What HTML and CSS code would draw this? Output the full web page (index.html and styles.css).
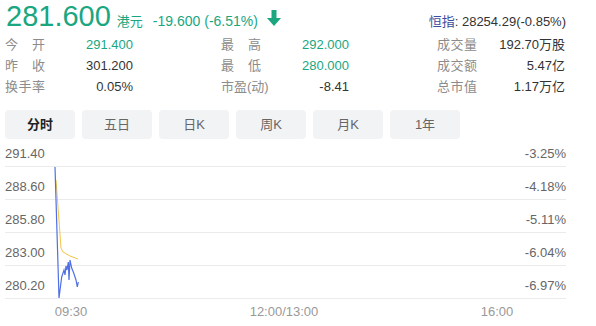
FILE: index.html
```html
<!DOCTYPE html>
<html lang="zh-CN">
<head>
    <meta charset="UTF-8">
    <title>行情</title>
    <link rel="stylesheet" href="styles.css">
</head>
<body>
<div class="quote">
    <div class="head">
        <span class="price">281.600</span>
        <span class="unit">港元</span>
        <span class="change">-19.600 (-6.51%)</span>
        <svg class="arrow" width="14" height="16" viewBox="0 0 14 16">
            <path d="M4.5 0 H9.5 V8 H14 L7 16 L0 8 H4.5 Z" fill="#1aa67f"/>
        </svg>
        <span class="index"><span class="index-name">恒指</span>: 28254.29(-0.85%)</span>
    </div>

    <div class="stats">
        <div class="stat"><span class="lbl">今 开</span><span class="val up">291.400</span></div>
        <div class="stat"><span class="lbl">最 高</span><span class="val up">292.000</span></div>
        <div class="stat"><span class="lbl">成交量</span><span class="val">192.70万股</span></div>
        <div class="stat"><span class="lbl">昨 收</span><span class="val">301.200</span></div>
        <div class="stat"><span class="lbl">最 低</span><span class="val up">280.000</span></div>
        <div class="stat"><span class="lbl">成交额</span><span class="val">5.47亿</span></div>
        <div class="stat"><span class="lbl">换手率</span><span class="val">0.05%</span></div>
        <div class="stat"><span class="lbl">市盈(动)</span><span class="val">-8.41</span></div>
        <div class="stat"><span class="lbl">总市值</span><span class="val">1.17万亿</span></div>
    </div>

    <div class="tabs">
        <div class="tab active">分时</div>
        <div class="tab">五日</div>
        <div class="tab">日K</div>
        <div class="tab">周K</div>
        <div class="tab">月K</div>
        <div class="tab">1年</div>
    </div>

    <div class="chart">
        <div class="row first"><span>291.40</span><span>-3.25%</span></div>
        <div class="row"><span>288.60</span><span>-4.18%</span></div>
        <div class="row"><span>285.80</span><span>-5.11%</span></div>
        <div class="row"><span>283.00</span><span>-6.04%</span></div>
        <div class="row"><span>280.20</span><span>-6.97%</span></div>
        <div class="times">
            <span>09:30</span>
            <span>12:00/13:00</span>
            <span>16:00</span>
        </div>
        <!-- price line and average line -->
        <svg class="plot" width="561" height="160" viewBox="0 0 561 160">
            <polyline fill="none" stroke="#f5c445" stroke-width="1"
                points="51,39 56,107 58,111 65,115 73,118"/>
            <polyline fill="none" stroke="#4f6fe3" stroke-width="1.2"
                points="50,26 54,157 56.7,136 59,129 60,134 61,125 62,129 63.3,121 64,139 65,119 66.7,127 68.7,132 70,136 71,139 72.3,146 73.3,141"/>
        </svg>
    </div>
</div>
</body>
</html>
```

FILE: styles.css
```css
body {
    margin: 0;
    font-family: "Liberation Sans", Arial, "Noto Sans CJK SC", sans-serif;
    font-size: 13px;
    color: #333;
    background: #fff;
}

.quote {
    width: 561px;
    margin-left: 5px;
}

.head {
    display: flex;
    align-items: baseline;
    height: 32px;
    line-height: 32px;
    color: #1aa67f;
}

.price {
    font-size: 29px;
    margin-left: 1px;
}

.unit {
    font-size: 13px;
    margin-left: 6px;
}

.change {
    font-size: 14px;
    margin-left: 10px;
}

.arrow {
    margin-left: 9px;
    align-self: center;
    position: relative;
    top: 2px;
}

.index {
    margin-left: auto;
    color: #333;
    font-size: 13px;
}

.index-name {
    color: #3d4d9e;
}

.stats {
    display: grid;
    grid-template-columns: repeat(3, 128px);
    column-gap: 88px;
    margin-top: 2px;
}

.stat {
    display: flex;
    justify-content: space-between;
    height: 21px;
    line-height: 21px;
}

.lbl {
    width: 40px;
    color: #8c8c8c;
    text-align: justify;
    text-align-last: justify;
    white-space: nowrap;
}

.val {
    color: #333;
}

.val.up {
    color: #1aa67f;
}

.tabs {
    display: flex;
    gap: 7px;
    margin-top: 13px;
}

.tab {
    width: 70px;
    height: 29px;
    line-height: 29px;
    text-align: center;
    background: #f2f3f5;
    border-radius: 4px;
    color: #666;
}

.tab.active {
    color: #222;
    font-weight: bold;
}

.chart {
    position: relative;
    margin-top: 2px;
    color: #666;
}

.row {
    display: flex;
    justify-content: space-between;
    align-items: flex-end;
    box-sizing: border-box;
    height: 33px;
    padding-bottom: 4px;
    line-height: 16px;
    border-bottom: 1px solid #ebebeb;
}

.row.first {
    height: 26px;
}

.times {
    display: flex;
    gap: 113px;
    padding-left: 16px;
    padding-top: 5px;
    line-height: 16px;
    color: #999;
}

.times span {
    width: 100px;
    text-align: center;
}

.plot {
    position: absolute;
    left: 0;
    top: 0;
    pointer-events: none;
}
```
